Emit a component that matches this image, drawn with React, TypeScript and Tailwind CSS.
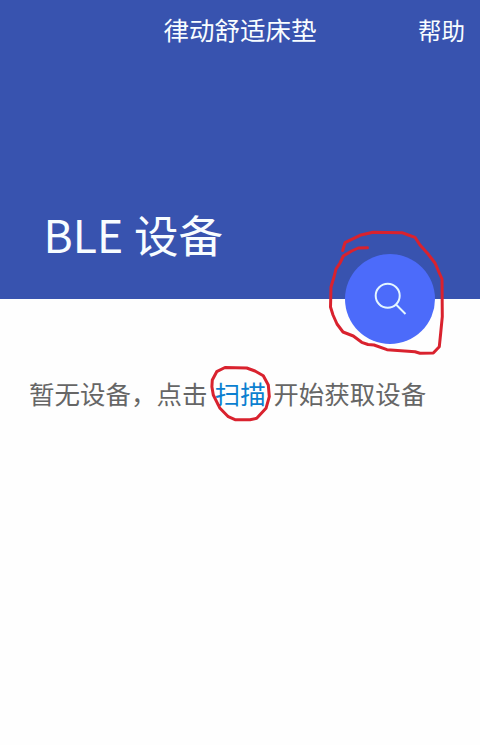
export default function App() {
  return (
    <main className="relative flex h-[745px] w-[480px] flex-col overflow-hidden bg-[#fefefe] font-['Noto_Sans','Noto_Sans_CJK_SC',sans-serif]">
      <header className="flex h-[299px] flex-col justify-between bg-[#3853af] text-[#f8fdff]">
        <nav className="grid h-[60px] grid-cols-[1fr_auto_1fr] items-center px-[15px]">
          <span />
          <h1 className="text-[25.5px] leading-[58px]">律动舒适床垫</h1>
          <button className="justify-self-end pt-0.5 text-[23.5px] leading-[58px]">帮助</button>
        </nav>
        <div className="flex items-end justify-between pl-[43.5px] pr-[45px]">
          <h2 className="mb-[33px] font-['Noto_Sans_CJK_SC',sans-serif] text-[44.5px] leading-[64px] [word-spacing:1px]">BLE 设备</h2>
          <button
            aria-label="扫描"
            className="-mb-[45px] flex size-[90px] items-center justify-center rounded-full bg-[#4c6bfa]"
          >
            <svg width="34" height="34" viewBox="0 0 34 34" fill="none" stroke="#e4f6ff" strokeWidth="2">
              <circle cx="14.7" cy="13.8" r="12" />
              <path d="M23 22.5L32.5 32" />
            </svg>
          </button>
        </div>
      </header>
      <p className="mt-[75px] whitespace-nowrap pl-[29px] text-[25.5px] leading-[40px] text-[#666666] [word-spacing:0.7px]">
        暂无设备，点击 <a className="text-[#0b7fd0]">扫描</a> 开始获取设备
      </p>
      <svg
        className="pointer-events-none absolute inset-0"
        width="480"
        height="745"
        viewBox="0 0 480 745"
        fill="none"
        stroke="#d9222e"
        strokeWidth="3"
        strokeLinejoin="round"
        strokeLinecap="round"
      >
        <path d="M367.5 247.7L358.3 248L351.7 251L343.3 256L340 263L336 269L334 277L331 287L330.5 307L333 315L337 324L343 332L353.3 336L361.7 342.3L368 344.5L374 345L387 349.7L415 351.7L420 353.3L433.3 353L439.3 346.7L440.7 333L442.3 316.7L442 279L439.3 273L435 263L428.3 254.3L420 245L415 237.3L408.3 235L402 232.7L373 232.3L360 235.3L345 242.7L342.7 250.5" />
        <path d="M211.9 386.7L212.3 380L216.7 371.7L225 367.5L246.7 368L255 371L263.3 375.7L268.3 385L269.3 396.7L266 408.3L256.7 418.3L250 419.7L235 419.7L228.3 416.7L220 408.3L213.3 395Z" />
      </svg>
    </main>
  );
}
